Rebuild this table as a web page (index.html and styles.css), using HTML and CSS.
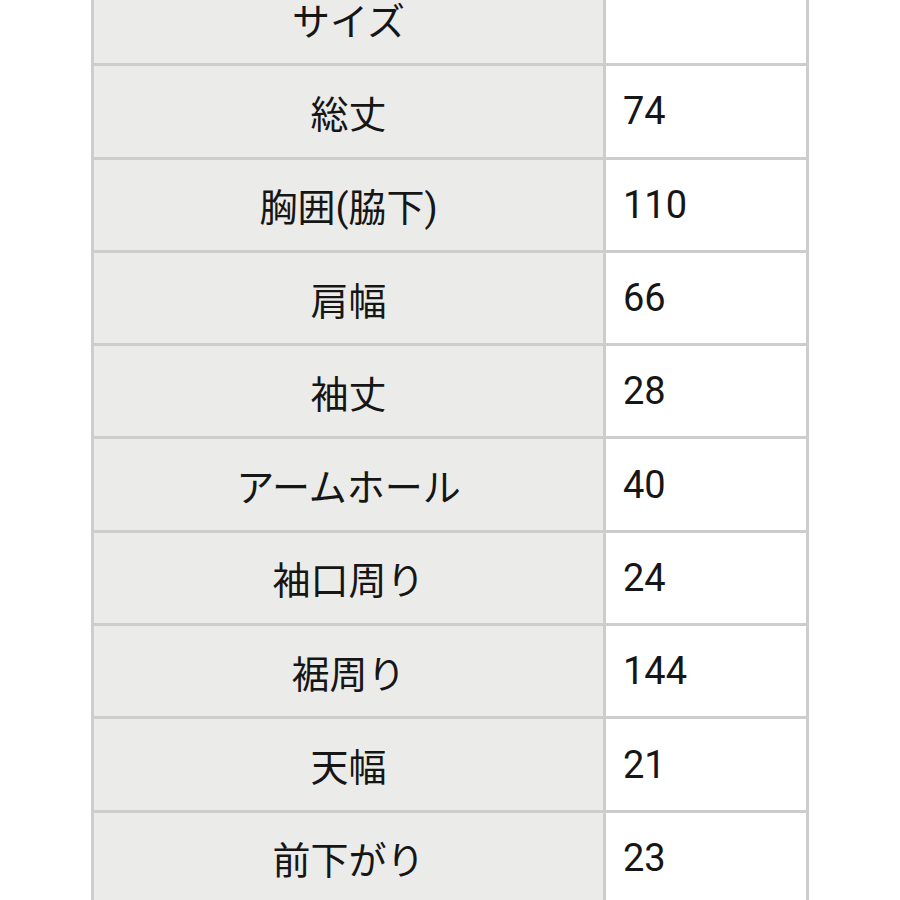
FILE: index.html
```html
<!DOCTYPE html>
<html lang="ja">
<head>
<meta charset="utf-8">
<link rel="stylesheet" href="styles.css">
</head>
<body>
<div class="page">
  <div class="sheet">
    <div class="label">サイズ</div><div class="value"></div>
    <div class="label">総丈</div><div class="value">74</div>
    <div class="label">胸囲(脇下)</div><div class="value">110</div>
    <div class="label">肩幅</div><div class="value">66</div>
    <div class="label">袖丈</div><div class="value">28</div>
    <div class="label">アームホール</div><div class="value">40</div>
    <div class="label">袖口周り</div><div class="value">24</div>
    <div class="label">裾周り</div><div class="value">144</div>
    <div class="label">天幅</div><div class="value">21</div>
    <div class="label">前下がり</div><div class="value">23</div>
  </div>
</div>
</body>
</html>
```

FILE: styles.css
```css
html, body {
  margin: 0;
  padding: 0;
  background: #ffffff;
}
.page {
  width: 900px;
  height: 900px;
  overflow: hidden;
  padding-left: 91px;
  box-sizing: border-box;
}
.sheet {
  margin-top: -30px;
  width: 718px;
  box-sizing: border-box;
  display: grid;
  grid-template-columns: 509px 200px;
  grid-auto-rows: 90.3px;
  gap: 3px;
  padding: 3px;
  background: #cdcdcd;
  font-family: Roboto, "Noto Sans CJK JP", sans-serif;
  font-size: 38px;
  color: #161616;
}
.label {
  background: #ebebea;
  display: flex;
  align-items: center;
  justify-content: center;
}
.value {
  background: #ffffff;
  display: flex;
  align-items: center;
  padding-left: 17px;
}
```
